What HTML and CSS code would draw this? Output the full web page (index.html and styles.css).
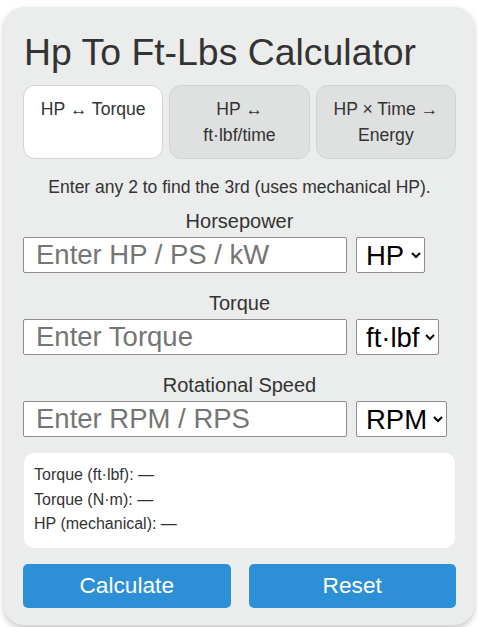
FILE: index.html
```html
<!DOCTYPE html>
<html lang="en">
<head>
  <meta charset="UTF-8" />
  <meta name="viewport" content="width=device-width, initial-scale=1.0" />
  <title>Hp To Ft-Lbs Calculator</title>
  <link rel="stylesheet" href="styles.css">
</head>
<body>
  <div class="calculator">
    <h1>Hp To Ft-Lbs Calculator</h1>

    <div class="tabs">
      <button class="tab active">HP ↔ Torque</button>
      <button class="tab">HP ↔<br>ft·lbf/time</button>
      <button class="tab">HP × Time →<br>Energy</button>
    </div>

    <p class="hint">Enter any 2 to find the 3rd (uses mechanical HP).</p>

    <div class="field">
      <label for="hp">Horsepower</label>
      <div class="input-row">
        <input type="text" id="hp" placeholder="Enter HP / PS / kW" />
        <select id="hpUnit">
          <option>HP</option>
          <option>PS</option>
          <option>kW</option>
        </select>
      </div>
    </div>

    <div class="field">
      <label for="torque">Torque</label>
      <div class="input-row">
        <input type="text" id="torque" placeholder="Enter Torque" />
        <select id="torqueUnit">
          <option>ft·lbf</option>
          <option>N·m</option>
        </select>
      </div>
    </div>

    <div class="field">
      <label for="speed">Rotational Speed</label>
      <div class="input-row">
        <input type="text" id="speed" placeholder="Enter RPM / RPS" />
        <select id="speedUnit">
          <option>RPM</option>
          <option>RPS</option>
        </select>
      </div>
    </div>

    <div class="results" id="results">
      <div>Torque (ft·lbf): <span id="outFtlbf">—</span></div>
      <div>Torque (N·m): <span id="outNm">—</span></div>
      <div>HP (mechanical): <span id="outHp">—</span></div>
    </div>

    <div class="actions">
      <button class="btn" id="calcBtn">Calculate</button>
      <button class="btn" id="resetBtn">Reset</button>
    </div>
  </div>
</body>
</html>
```

FILE: styles.css
```css
body {
  font-family: 'Liberation Sans', Arial, sans-serif;
  background: #fff;
  margin: 0;
  padding: 7px 4px;
  color: #333;
}

.calculator {
  background: #ebecec;
  border-radius: 20px;
  box-shadow: 0 3px 6px rgba(0, 0, 0, 0.22);
  padding: 23px 18px 17px 19px;
  width: 470px;
  box-sizing: border-box;
  margin: 0 auto;
}

h1 {
  font-size: 37.4px;
  font-weight: 400;
  line-height: 44px;
  margin: 0 0 11px 1px;
  color: #333;
}

.tabs {
  display: flex;
  gap: 6px;
}

.tab {
  flex: 1;
  font-family: inherit;
  font-size: 17.6px;
  line-height: 26px;
  color: #333;
  background: #dfe0e0;
  border: 1px solid #d2d3d3;
  border-radius: 12px;
  padding: 10px 2px;
  min-height: 73px;
  text-align: center;
  display: flex;
  justify-content: center;
  align-items: flex-start;
}

.tab.active {
  background: #fff;
}

.hint {
  text-align: center;
  font-size: 17.5px;
  line-height: 24px;
  margin: 16px 0 10px;
}

.field + .field {
  margin-top: 18px;
}

.field label {
  display: block;
  text-align: center;
  font-size: 20px;
  line-height: 24px;
  margin-bottom: 4px;
}

.input-row {
  display: flex;
  gap: 9px;
  align-items: center;
}

.input-row input {
  width: 324px;
  height: 36px;
  box-sizing: border-box;
  padding: 0 12px;
  font-family: inherit;
  font-size: 27.5px;
  border: 1px solid #8e8e8e;
  border-radius: 2px;
  background: #fff;
  color: #333;
}

.input-row input::placeholder {
  color: #757575;
}

.input-row select {
  height: 36px;
  box-sizing: border-box;
  font-family: inherit;
  font-size: 27.5px;
  color: #000;
  background: #fff;
  border: 1px solid #8e8e8e;
  border-radius: 2px;
  padding: 0 2px 0 5px;
}

.results {
  background: #fff;
  border-radius: 10px;
  margin: 16px 1px 0;
  padding: 10px 10px 11px;
  font-size: 16px;
  line-height: 24.5px;
}

.actions {
  display: flex;
  gap: 18px;
  margin-top: 16px;
}

.btn {
  flex: 1;
  height: 44px;
  font-family: inherit;
  font-size: 22.7px;
  color: #fff;
  background: #2d8fd6;
  border: none;
  border-radius: 5px;
  cursor: pointer;
}

.btn:hover {
  background: #2277b8;
}
```
